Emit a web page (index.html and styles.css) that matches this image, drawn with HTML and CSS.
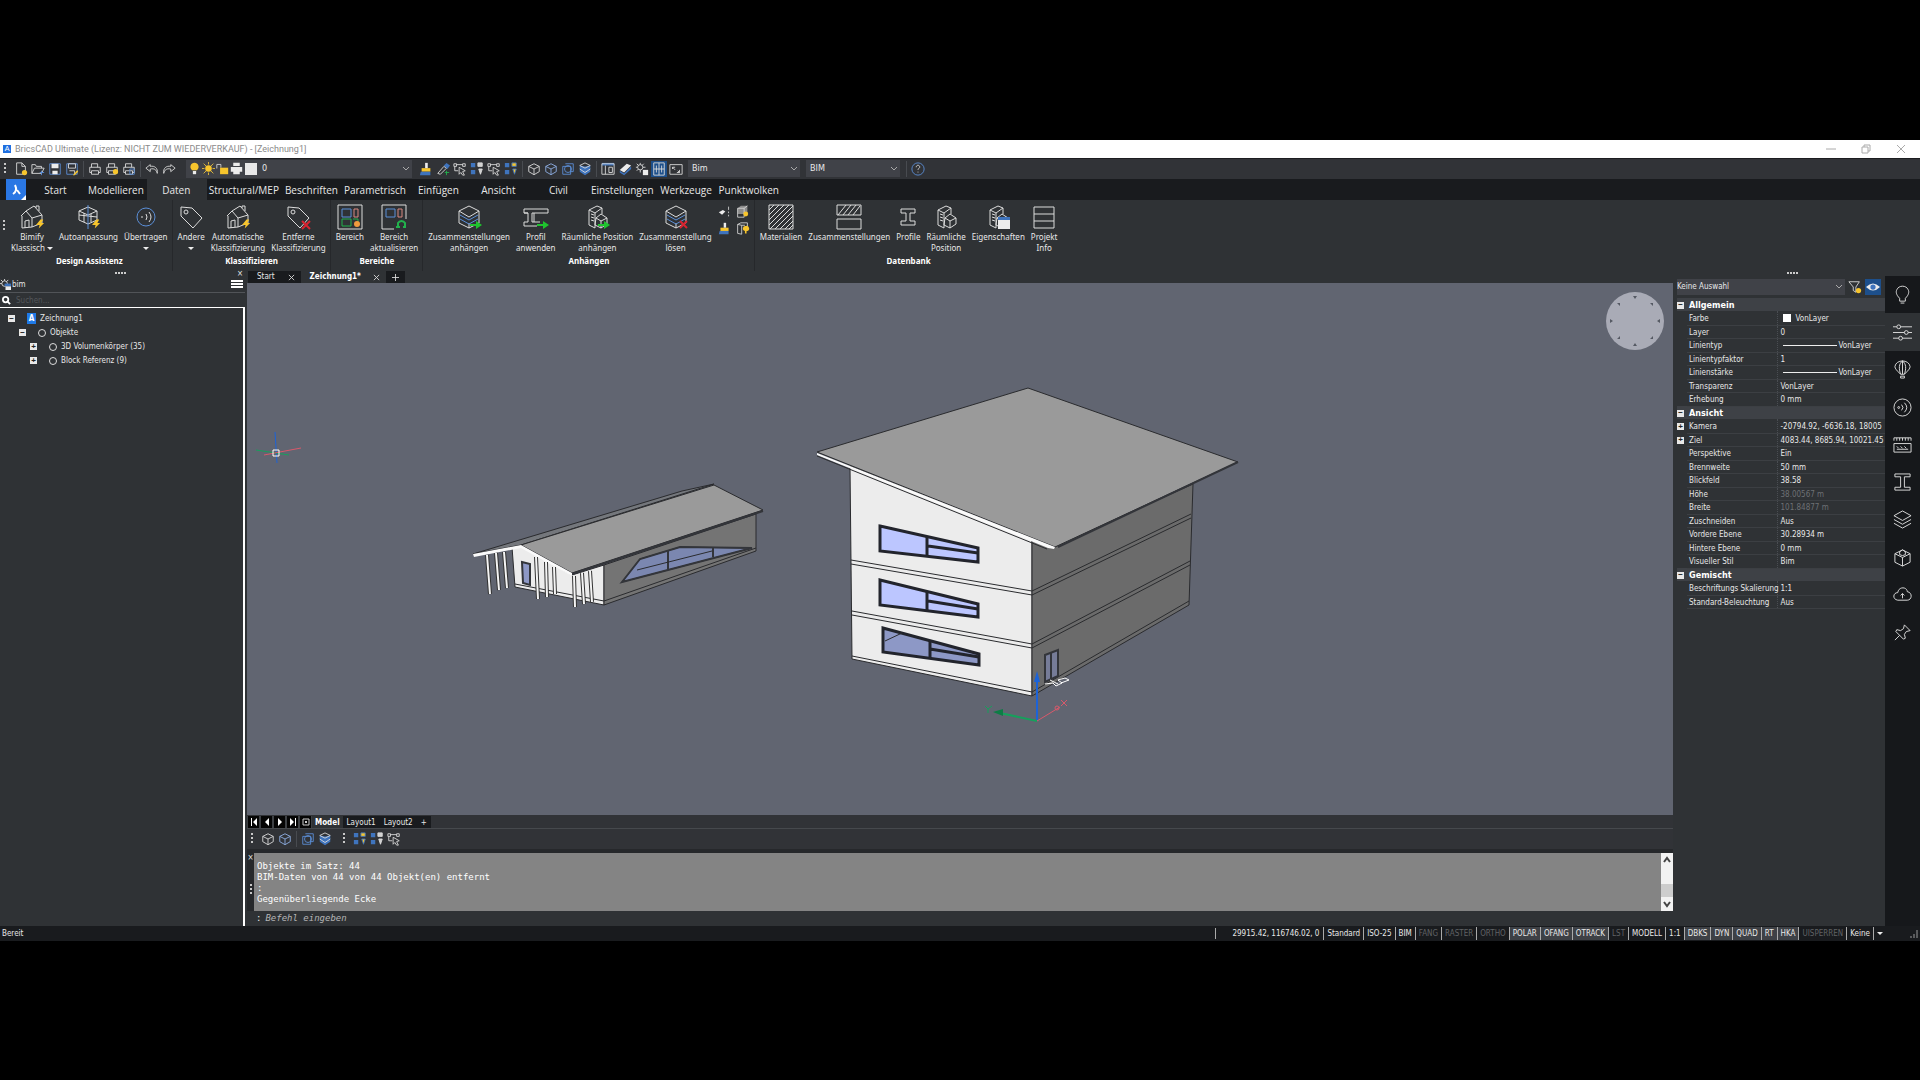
FILE: index.html
```html
<!DOCTYPE html>
<html lang="de">
<head>
	<meta charset="utf-8">
	<title>BricsCAD Ultimate - [Zeichnung1]</title>
	<link rel="stylesheet" href="styles.css">
</head>
<body>
<!-- shared icon parts -->
<svg class="defs" aria-hidden="true">
	<symbol id="cube" viewBox="0 0 16 16"><path d="M8 2l6 3v6l-6 3.500-6-3.500V5zM2 5l6 3 6-3M8 8v6.500"/></symbol>
	<symbol id="printer" viewBox="0 0 16 16"><path d="M4 6V2h7v4M4 12H2V6h12v6h-2M4 10h8v4H4z"/></symbol>
	<symbol id="tag" viewBox="0 0 24 24"><path d="M2 2l11 1 10 10-9 10L2 11z"/><circle cx="7" cy="7" r="2"/></symbol>
	<symbol id="house" viewBox="0 0 24 24"><path d="M1 11L6 6l6 7v9l-10 1v-12M6 6l8-5 8 9v8l-10 4M12 13l10-3M5 23v-7l4-1v7M16 3V1h3v5"/></symbol>
	<symbol id="bolt" viewBox="0 0 10 10"><path d="M5 0L0 6h4L3 10l6-6H6l2-4z"/></symbol>
	<symbol id="layers" viewBox="0 0 24 24"><path d="M12 1l10 5-10 6L2 6zM2 6v12l10 5 10-5V6M12 18v5"/><path class="blue" d="M3 10l9 5 9-5M3 14l9 5 9-5"/></symbol>
	<symbol id="arrow" viewBox="0 0 12 8"><path d="M0 3h6V0l6 4-6 4V5H0z"/></symbol>
	<symbol id="beam" viewBox="0 0 24 24"><path d="M5 4h14v4h-5v8h5v4H5v-4h5V8H5z"/></symbol>
	<symbol id="tower" viewBox="0 0 24 24"><path d="M4 5l8-4 5 2v6M4 5v15l6 3V8zM10 8l7-5M6 9l3 1M6 12l3 1M6 15l3 1M11 13l5-4 6 4v6l-6 4-6-3zM11 13l5 3 6-3M16 16v7"/></symbol>
	<symbol id="cells" viewBox="0 0 16 16"><path class="fb" d="M1 1h5v5H1zM1 9h5v5H1z"/><path d="M9 1h5v4H9z"/><path d="M10 8h4l-2 6z"/></symbol>
	<symbol id="pick" viewBox="0 0 16 16"><path d="M1 2h3v3H1zM11 2h3v3h-3zM4 3h7M2 5v5h4M7 6l7 4-3 1 2 4-2 0-2-3-2 2z"/></symbol>
	<symbol id="brush" viewBox="0 0 16 16"><path class="fy" d="M3 7h10v4H3z"/><path class="fw" d="M7 1h3v6H7z"/><path class="fb" d="M2 11h11v4H1z"/></symbol>
</svg>

<div class="app">
	<header class="title-bar">
		<span class="app-badge">A</span>
		<span class="title">BricsCAD Ultimate (Lizenz: NICHT ZUM WIEDERVERKAUF) - [Zeichnung1]</span>
		<div class="window-buttons">
			<button aria-label="Minimieren"><svg viewBox="0 0 10 10"><path d="M0 5h10"/></svg></button>
			<button aria-label="Verkleinern"><svg viewBox="0 0 10 10"><path d="M1 3h6v6H1zM3 3V1h6v6H7"/></svg></button>
			<button aria-label="Schließen"><svg viewBox="0 0 10 10"><path d="M1 1l8 8M9 1L1 9"/></svg></button>
		</div>
	</header>

	<div class="toolbar">
		<i class="grip"></i>
		<div class="tools">
			<button aria-label="Neu"><svg viewBox="0 0 16 16"><path d="M3 1h6l4 4v9H3zM9 1v4h4"/><circle class="fy" cx="12" cy="12" r="3"/></svg></button>
			<button aria-label="Öffnen"><svg viewBox="0 0 16 16"><path d="M1 13V3h4l1 2h6v2M1 13l3-6h11l-3 6z"/><path class="blue" d="M12 10v5M10 12h5"/></svg></button>
			<button aria-label="Speichern"><svg viewBox="0 0 16 16"><path class="blue" d="M2 2h12v12H2z"/><path class="fw" d="M4 2h8v5H4zM5 10h6v4H5z"/></svg></button>
			<button aria-label="Speichern als"><svg viewBox="0 0 16 16"><path class="blue" d="M2 2h12v12H2z"/><path d="M4 2h8v5H4zM5 10h6v4"/><path class="fy" d="M9 15l5-6 1 2-4 4z"/></svg></button>
		</div>
		<div class="tools">
			<button aria-label="Drucken"><svg><use href="#printer"/></svg></button>
			<button aria-label="Plotten"><svg viewBox="0 0 16 16"><use href="#printer"/><circle class="fy" cx="12" cy="11" r="3"/></svg></button>
			<button aria-label="Vorschau"><svg viewBox="0 0 16 16"><use href="#printer"/><path class="blue" d="M9 8h5v6H9z"/></svg></button>
		</div>
		<div class="tools">
			<button aria-label="Rückgängig"><svg viewBox="0 0 16 16"><path d="M6 3L1 7l5 4V8c5-1 7 1 8 5 1-6-3-9-8-8z"/></svg></button>
			<button aria-label="Wiederholen"><svg viewBox="0 0 16 16"><path d="M10 3l5 4-5 4V8c-5-1-7 1-8 5-1-6 3-9 8-8z"/></svg></button>
		</div>
		<div class="layer-box">
			<svg viewBox="0 0 16 16"><path class="fy" d="M8 1a5 5 0 0 1 3 9H5a5 5 0 0 1 3-9z"/><path class="fw" d="M6 11h4v4H6z"/></svg>
			<svg viewBox="0 0 16 16"><circle class="fy" cx="8" cy="8" r="4"/><path class="yellow" d="M8 0v3M8 13v3M0 8h3M13 8h3M2 2l3 3M11 11l3 3M14 2l-3 3M5 11l-3 3"/></svg>
			<svg viewBox="0 0 16 16"><path d="M1 8V3h5v4"/><path class="fy" d="M5 7h10v8H5z"/></svg>
			<svg viewBox="0 0 16 16"><path class="fw" d="M1 6h14v6H1zM4 1h8v4H4zM4 11h8v4H4z"/></svg>
			<i class="layer-color"></i>
			<select class="combo" aria-label="Layer"><option>0</option></select>
		</div>
		<div class="tools">
			<button aria-label="Eigenschaften übertragen"><svg><use href="#brush"/></svg></button>
			<button aria-label="Pipette"><svg viewBox="0 0 16 16"><path d="M2 13l7-8 3 2-7 7z"/><path class="fb" d="M9 4l3-3 4 3-3 4z"/><path class="green" d="M12 10v5M10 12h5"/></svg></button>
			<button aria-label="Auswahl"><svg><use href="#pick"/></svg></button>
			<button aria-label="Isolieren"><svg class="solid"><use href="#cells"/></svg></button>
			<button aria-label="Ausblenden"><svg><use href="#pick"/></svg></button>
			<button aria-label="Einblenden"><svg class="lit"><use href="#cells"/></svg></button>
		</div>
		<div class="tools">
			<button aria-label="Körper"><svg><use href="#cube"/></svg></button>
			<button aria-label="Kanten"><svg class="bluish"><use href="#cube"/></svg></button>
			<button aria-label="Begrenzung"><svg viewBox="0 0 16 16"><path class="blue" d="M2 5h9v9H2zM5 2h9v9h-3"/><circle class="blue" cx="8" cy="8" r="4"/></svg></button>
			<button aria-label="Flächen"><svg viewBox="0 0 16 16"><path class="fb" d="M8 5l6-1v7l-6 4-6-4V4z"/><path d="M8 1l6 3-6 3-6-3zM2 8l6 4 6-4"/></svg></button>
		</div>
		<div class="tools">
			<button aria-label="Tabelle"><svg viewBox="0 0 16 16"><path class="fb" d="M1 1h14v3H1z"/><path d="M1 2h14v12H1zM5 4v10M9 6h4v6H9z"/></svg></button>
			<button aria-label="Radierer"><svg viewBox="0 0 16 16"><path class="fw" d="M2 9l8-7 5 2-8 8z"/><path class="fb" d="M2 10l5 3 8-8v3l-8 7-5-3z"/></svg></button>
			<button aria-label="Einstellungen"><svg viewBox="0 0 16 16"><circle cx="6" cy="6" r="3"/><path d="M6 1v2M6 9v3M1 6h2M9 6h3M2 2l2 2M10 2L8 4M2 10l2-2"/><path class="fw" d="M9 9h6v6H9z"/></svg></button>
			<button class="pressed" aria-label="Explorer"><svg viewBox="0 0 16 16"><path d="M2 1h12v14H2zM8 1v14M2 8h12M5 4v8M11 4v8"/></svg></button>
			<button aria-label="Vollbild"><svg viewBox="0 0 16 16"><path d="M1 3h14v11H1zM4 8V6h3M9 12h3v-3M4 6l3 3M12 12l-2-2"/></svg></button>
		</div>
		<select class="combo workspace" aria-label="Arbeitsbereich"><option>Bim</option></select>
		<select class="combo profile" aria-label="Profil"><option>BIM</option></select>
		<div class="tools help">
			<button aria-label="Hilfe"><svg viewBox="0 0 16 16"><circle class="blue" cx="8" cy="8" r="7"/><path d="M6 6c0-3 4-3 4 0 0 1-2 1-2 3M8 11v1"/></svg></button>
		</div>
	</div>

	<nav class="ribbon-tabs">
		<button class="logo" aria-label="BricsCAD"><svg viewBox="0 0 20 20"><path d="M9 5c2 4 1 7-2 9M11 10l3 4"/><path class="corner" d="M20 15v5h-5z"/></svg></button>
		<button>Start</button>
		<button>Modellieren</button>
		<button class="active">Daten</button>
		<button>Structural/MEP</button>
		<button>Beschriften</button>
		<button>Parametrisch</button>
		<button>Einfügen</button>
		<button>Ansicht</button>
		<button>Civil</button>
		<button>Einstellungen</button>
		<button>Werkzeuge</button>
		<button>Punktwolken</button>
	</nav>

	<div class="ribbon">
		<i class="grip"></i>
		<section class="group">
			<div class="items">
				<button><svg viewBox="0 0 24 24"><use href="#house"/><use class="fy" href="#bolt" x="16" y="14" width="9" height="10"/></svg>Bimify<br><span>Klassisch <i class="caret"></i></span></button>
				<button><svg viewBox="0 0 24 24"><path d="M3 6l9-4 9 4v9l-9 4-9-4zM3 6l9 4 9-4M3 10l18 2M8 8v9M15 9v8"/><path class="blue" d="M12 0v24"/><use class="fy" href="#bolt" x="16" y="14" width="9" height="10"/></svg>Autoanpassung</button>
				<button><svg viewBox="0 0 24 24"><circle class="blue" cx="12" cy="12" r="9"/><path d="M7 12h2M12 9q2 3 0 6M15 7q4 5 0 10"/></svg>Übertragen<br><i class="caret"></i></button>
			</div>
			<h2>Design Assistenz</h2>
		</section>
		<section class="group">
			<div class="items">
				<button><svg><use href="#tag"/></svg>Andere<br><i class="caret"></i></button>
				<button><svg viewBox="0 0 24 24"><use href="#house"/><use class="fy" href="#bolt" x="16" y="14" width="9" height="10"/></svg>Automatische<br>Klassifizierung</button>
				<button><svg viewBox="0 0 24 24"><use href="#tag"/><path class="red" d="M16 16l8 8M24 16l-8 8"/></svg>Entferne<br>Klassifizierung</button>
			</div>
			<h2>Klassifizieren</h2>
		</section>
		<section class="group areas">
			<div class="items">
				<button><svg viewBox="0 0 24 24"><path d="M0 0h24v24H0z"/><path class="blue" d="M4 4h9v8H4z"/><path class="red thin" d="M16 4h4v8h-4z"/><path class="green thin" d="M4 14h9v7H4zM15 14h5v7"/><circle class="fo" cx="19" cy="19" r="3"/></svg>Bereich</button>
				<button><svg viewBox="0 0 24 24"><path d="M0 0h24v14M0 0v24h12"/><path class="blue" d="M4 4h9v8H4z"/><path class="red thin" d="M16 4h4v8h-4z"/><path class="green bold" d="M16 21v-3a4 4 0 0 1 7 0v3M14 22h4M21 22h3"/></svg>Bereich<br>aktualisieren</button>
			</div>
			<h2>Bereiche</h2>
		</section>
		<section class="group attach">
			<div class="items">
				<button><svg viewBox="0 0 24 24"><use href="#layers"/><use class="fg" href="#arrow" x="13" y="16" width="12" height="8"/></svg>Zusammenstellungen<br>anhängen</button>
				<button><svg viewBox="0 0 24 24"><path d="M0 4h24v4H8v9h8M0 4v4h4v9H0v4h13M0 8h4M10 8v9"/><use class="fg" href="#arrow" x="13" y="16" width="12" height="8"/></svg>Profil<br>anwenden</button>
				<button><svg viewBox="0 0 24 24"><use href="#tower"/><use class="fg" href="#arrow" x="13" y="16" width="12" height="8"/></svg>Räumliche Position<br>anhängen</button>
				<button><svg viewBox="0 0 24 24"><use href="#layers"/><path class="red" d="M16 16l7 7M23 16l-7 7"/></svg>Zusammenstellung<br>lösen</button>
				<div class="mini-tools">
					<button aria-label="Trennen"><svg viewBox="0 0 16 16"><path class="fw" d="M1 9l5-3 3 2-4 4z"/><path d="M13 2v4M13 8v2M13 12v2"/></svg></button>
					<button aria-label="Inhalt"><svg viewBox="0 0 16 16"><path class="fgrey" d="M2 4l4-3h8v10H2z"/><path d="M2 4h8v11H2zM10 4l4-3"/><circle class="fy" cx="12" cy="11" r="3"/></svg></button>
					<button aria-label="Übertragen"><svg><use href="#brush"/></svg></button>
					<button aria-label="Anzeigen"><svg viewBox="0 0 16 16"><path d="M2 3l4-2h8v4M2 3v11l5 1V4zM7 4h4"/><path class="fy" d="M12 5a3 3 0 0 1 2 6h-1v3h-2v-3a3 3 0 0 1 1-6z"/></svg></button>
				</div>
			</div>
			<h2>Anhängen</h2>
		</section>
		<section class="group">
			<div class="items">
				<button><svg viewBox="0 0 24 24"><path d="M0 0h24v24H0zM0 5l5-5M0 10L10 0M0 15L15 0M0 20L20 0M1 24L24 1M6 24L24 6M11 24l13-13M16 24l8-8M20 24l4-4"/></svg>Materialien</button>
				<button><svg viewBox="0 0 24 24"><path d="M0 0h24v10H0zM0 14h24v10H0zM1 10L9 0M6 10l8-10M11 10l8-10M16 10l7-9"/></svg>Zusammenstellungen</button>
				<button><svg><use href="#beam"/></svg>Profile</button>
				<button><svg><use href="#tower"/></svg>Räumliche<br>Position</button>
				<button><svg viewBox="0 0 24 24"><use href="#tower"/><path class="fw" d="M12 12h12v12H12z"/><path class="fb" d="M12 12h12v3H12z"/></svg>Eigenschaften</button>
				<button><svg viewBox="0 0 24 24"><path d="M2 2h20v21H2zM2 9h20M2 16h20"/></svg>Projekt<br>Info</button>
			</div>
			<h2>Datenbank</h2>
		</section>
	</div>

	<main class="workspace-area">
		<aside class="structure">
			<div class="panel-grip"><i></i><button aria-label="Panel schließen">×</button></div>
			<div class="panel-head">
				<svg viewBox="0 0 12 12"><circle cx="5" cy="5" r="3"/><path d="M5 0v2M0 5h2M1 1l2 2M9 1L7 3"/><path class="fb" d="M5 5h7v3H5z"/><path class="fw" d="M6 8h6v4H6z"/></svg>
				<span>bim</span>
				<button aria-label="Menü"><svg viewBox="0 0 12 8"><path d="M0 1h12M0 4h12M0 7h12"/></svg></button>
			</div>
			<label class="search">
				<svg viewBox="0 0 10 10"><circle cx="4" cy="4" r="3"/><path d="M6 6l3 3"/></svg>
				<input type="search" placeholder="Suchen..." aria-label="Suchen">
			</label>
			<ul class="tree">
				<li><button class="fold" aria-label="Zuklappen">−</button><span class="doc">A</span>Zeichnung1
					<ul>
						<li><button class="fold" aria-label="Zuklappen">−</button><span class="ring"></span>Objekte
							<ul>
								<li><button class="fold" aria-label="Aufklappen">+</button><span class="ring"></span>3D Volumenkörper (35)</li>
								<li><button class="fold" aria-label="Aufklappen">+</button><span class="ring"></span>Block Referenz (9)</li>
							</ul>
						</li>
					</ul>
				</li>
			</ul>
		</aside>

		<div class="center">
			<div class="doc-tabs">
				<div class="doc-tab"><button>Start</button><button aria-label="Start schließen"><svg viewBox="0 0 8 8"><path d="M1 1l6 6M7 1L1 7"/></svg></button></div>
				<div class="doc-tab active"><button>Zeichnung1*</button><button aria-label="Zeichnung1 schließen"><svg viewBox="0 0 8 8"><path d="M1 1l6 6M7 1L1 7"/></svg></button></div>
				<button class="add" aria-label="Neue Zeichnung"><svg viewBox="0 0 8 8"><path d="M4 0v8M0 4h8"/></svg></button>
			</div>

			<div class="viewport">
				<svg class="scene" role="img" aria-label="3D Modell">
					<g transform="translate(-247 -283)">
						<!-- low building -->
						<g class="edges">
							<path class="roof-back" d="M473 554L682 491 714 484 521 545z"/>
							<path class="front" d="M512 547L521 546 572 575 604 565V605L515 587z"/>
							<path class="side" d="M604 565L756 514V551L604 605z"/>
							<path class="line" d="M604 601L756 548M515 584L604 601"/>
							<path class="glass-side" d="M622 582L640 559 680 547 752 548z"/>
							<path class="frame" d="M622 582L640 559 680 547 752 548zM668 551V569M713 547V557"/>
							<path class="line" d="M637 570L712 551"/>
							<path class="roof" d="M521 545L714 485 763 510 572 573z"/>
							<path class="frame" d="M572 574L763 511"/>
							<path class="fascia" d="M473 554L521 545 572 573V576L521 548 474 557z"/>
							<path class="glass-dark frame" d="M522 562L530 564V585L523 583z"/>
						</g>
						<path class="post-edge" d="M487 555L490 594M496 553L499 590M504 552L507 588M536 557L538 599M546 562L547 597M554 567L555 594M574 576L575 607M582 573L584 604M590 571L592 602"/>
						<path class="post" d="M487 555L490 594M496 553L499 590M504 552L507 588M536 557L538 599M546 562L547 597M554 567L555 594M574 576L575 607M582 573L584 604M590 571L592 602"/>
						<!-- three storey building -->
						<g class="edges">
							<path class="front" d="M850 466L1032 539V696L852 659z"/>
							<path class="side-dark" d="M1032 539L1055 546 1193 484 1189 605 1032 696z"/>
							<path class="line" d="M851 560L1032 591 1191 514M851 564L1032 595 1191 518M852 611L1032 644 1190 561M852 615L1032 648 1190 565M852 656L1032 692 1189 601"/>
							<path class="roof" d="M817 452L1028 388 1238 462 1055 547z"/>
							<path class="fascia" d="M817 453L1055 547 1054 549 1048 548 817 455z"/>
							<path class="line" d="M817 456L1047 549"/>
							<path class="frame" d="M1058 547L1238 462"/>
							<g class="window">
								<path d="M880 526L978 548V562L880 551z"/>
								<path d="M927 537V556M928 546L978 553"/>
								<path d="M880 580L978 604V617L880 605z"/>
								<path d="M927 592V610M928 601L978 609"/>
								<path class="glass-dark" d="M883 628L979 654V665L883 652z"/>
								<path d="M930 641V658M930 649L979 657"/>
							</g>
							<path class="line" d="M885 641L902 633"/>
							<path class="glass-door frame" d="M1045 655L1058 650V676L1045 682zM1051 653V679"/>
						</g>
						<!-- ucs icon -->
						<path class="note" d="M1045 684l8-1 3 3 6-3-4-3 7-2 4 2-8 3M1050 680l8 4"/>
						<path class="axis-z" d="M1037 721V680"/><path class="cone-z" d="M1037 671l3 11h-6z"/>
						<path class="axis-y" d="M1037 721L1000 713"/><path class="cone-y" d="M993 712l10-3v7z"/><path class="axis-y thin" d="M985 706l3 3 4-3M988 709v4"/>
						<path class="axis-x" d="M1037 721L1060 707"/><circle class="axis-x" cx="1057" cy="708" r="2"/><path class="axis-x thin" d="M1061 700l6 6M1067 700l-6 6"/>
						<!-- crosshair -->
						<path class="axis-z thin" d="M275 432L277 463"/><path class="axis-y thin" d="M256 450L289 455"/><path class="axis-x thin" d="M264 455L301 448"/>
						<path class="cursor" d="M273 450h6v6h-6z"/>
					</g>
				</svg>
				<svg class="look-from" viewBox="0 0 58 58" role="img" aria-label="Blickrichtung">
					<circle cx="29" cy="29" r="29"/>
					<path d="M27 4h4l-2 3zM27 54h4l-2-3zM4 27v4l3-2zM54 27v4l-3-2zM11 11h3v3zM44 11h3v3zM11 47h3v-3zM44 47h3v-3z"/>
				</svg>
			</div>

			<div class="layout-tabs">
				<button class="step" aria-label="Erstes"><svg viewBox="0 0 8 8"><path d="M1 0h1v8H1zM7 0v8L3 4z"/></svg></button>
				<button class="step" aria-label="Zurück"><svg viewBox="0 0 8 8"><path d="M6 0v8L2 4z"/></svg></button>
				<button class="step" aria-label="Weiter"><svg viewBox="0 0 8 8"><path d="M2 0v8l4-4z"/></svg></button>
				<button class="step" aria-label="Letztes"><svg viewBox="0 0 8 8"><path d="M1 0v8l4-4zM6 0h1v8H6z"/></svg></button>
				<button class="step" aria-label="Liste"><svg class="list" viewBox="0 0 8 8"><path d="M1 1h6v6H1zM3 3l2 2M5 3L3 5"/></svg></button>
				<button class="active">Model</button>
				<button>Layout1</button>
				<button>Layout2</button>
				<button>+</button>
			</div>

			<div class="toolbar lower">
				<i class="grip"></i>
				<div class="tools">
					<button aria-label="Körper"><svg><use href="#cube"/></svg></button>
					<button aria-label="Kanten"><svg class="bluish"><use href="#cube"/></svg></button>
				</div>
				<div class="tools">
					<button aria-label="Begrenzung"><svg viewBox="0 0 16 16"><path class="blue" d="M2 5h9v9H2zM5 2h9v9h-3"/><circle class="blue" cx="8" cy="8" r="4"/></svg></button>
					<button aria-label="Flächen"><svg viewBox="0 0 16 16"><path class="fb" d="M8 5l6-1v7l-6 4-6-4V4z"/><path d="M8 1l6 3-6 3-6-3zM2 8l6 4 6-4"/></svg></button>
				</div>
				<i class="grip"></i>
				<div class="tools">
					<button aria-label="Einblenden"><svg class="lit"><use href="#cells"/></svg></button>
					<button aria-label="Isolieren"><svg class="solid"><use href="#cells"/></svg></button>
					<button aria-label="Ausblenden"><svg><use href="#pick"/></svg></button>
				</div>
			</div>

			<div class="command">
				<div class="command-side"><button aria-label="Befehlszeile schließen">×</button><i class="grip"></i></div>
				<pre class="log">Objekte im Satz: 44
BIM-Daten von 44 von 44 Objekt(en) entfernt
:
Gegenüberliegende Ecke</pre>
				<div class="scrollbar">
					<button aria-label="Hoch"><svg viewBox="0 0 8 8"><path d="M1 6l3-4 3 4"/></svg></button>
					<i class="thumb"></i>
					<button aria-label="Runter"><svg viewBox="0 0 8 8"><path d="M1 2l3 4 3-4"/></svg></button>
				</div>
			</div>
			<label class="prompt">: <input type="text" placeholder="Befehl eingeben" aria-label="Befehl"></label>
		</div>

		<aside class="properties">
			<div class="panel-grip"><i></i></div>
			<div class="selection">
				<select class="combo" aria-label="Auswahl"><option>Keine Auswahl</option></select>
				<button aria-label="Filter"><svg viewBox="0 0 16 16"><path d="M1 2h12L9 8v6l-3-2V8z"/><circle class="fy" cx="12" cy="12" r="3"/></svg></button>
				<button class="pressed" aria-label="Vorschau"><svg viewBox="0 0 16 16"><path class="fw" d="M0 8q8-8 16 0-8 8-16 0z"/><circle class="fb" cx="8" cy="8" r="3"/></svg></button>
			</div>
			<table>
				<colgroup><col class="col-fold"><col class="col-name"><col></colgroup>
				<tbody>
					<tr class="head"><td><button class="fold">−</button></td><th colspan="2">Allgemein</th></tr>
					<tr><td></td><th>Farbe</th><td><i class="swatch"></i>VonLayer</td></tr>
					<tr><td></td><th>Layer</th><td>0</td></tr>
					<tr><td></td><th>Linientyp</th><td><i class="stroke"></i>VonLayer</td></tr>
					<tr><td></td><th>Linientypfaktor</th><td>1</td></tr>
					<tr><td></td><th>Linienstärke</th><td><i class="stroke"></i>VonLayer</td></tr>
					<tr><td></td><th>Transparenz</th><td>VonLayer</td></tr>
					<tr><td></td><th>Erhebung</th><td>0 mm</td></tr>
					<tr class="head"><td><button class="fold">−</button></td><th colspan="2">Ansicht</th></tr>
					<tr><td><button class="fold">+</button></td><th>Kamera</th><td>-20794.92, -6636.18, 18005</td></tr>
					<tr><td><button class="fold">+</button></td><th>Ziel</th><td>4083.44, 8685.94, 10021.45</td></tr>
					<tr><td></td><th>Perspektive</th><td>Ein</td></tr>
					<tr><td></td><th>Brennweite</th><td>50 mm</td></tr>
					<tr><td></td><th>Blickfeld</th><td>38.58</td></tr>
					<tr><td></td><th>Höhe</th><td class="locked">38.00567 m</td></tr>
					<tr><td></td><th>Breite</th><td class="locked">101.84877 m</td></tr>
					<tr><td></td><th>Zuschneiden</th><td>Aus</td></tr>
					<tr><td></td><th>Vordere Ebene</th><td>30.28934 m</td></tr>
					<tr><td></td><th>Hintere Ebene</th><td>0 mm</td></tr>
					<tr><td></td><th>Visueller Stil</th><td>Bim</td></tr>
					<tr class="head"><td><button class="fold">−</button></td><th colspan="2">Gemischt</th></tr>
					<tr><td></td><th>Beschriftungs Skalierung</th><td>1:1</td></tr>
					<tr><td></td><th>Standard-Beleuchtung</th><td>Aus</td></tr>
				</tbody>
			</table>
		</aside>

		<nav class="side-tabs">
			<button aria-label="Tipps"><svg viewBox="0 0 20 20"><path d="M7 14C3 10 3 7 4 5c2-5 10-5 12 0 1 2 1 5-3 9v3H7zM8 19h4"/></svg></button>
			<button class="active" aria-label="Eigenschaften"><svg viewBox="0 0 20 20"><path d="M0 4h4M8 4h12M0 10h12M16 10h4M0 16h6M10 16h10"/><circle cx="6" cy="4" r="2"/><circle cx="14" cy="10" r="2"/><circle cx="8" cy="16" r="2"/></svg></button>
			<button aria-label="Ballon"><svg viewBox="0 0 20 20"><path d="M8 15C4 11 2 9 2 7c1-8 15-8 16 0 0 2-2 4-6 8zM8 15C6 9 6 4 10 1c4 3 4 8 2 14M10 1v14M8 17h4v2H8z"/></svg></button>
			<button aria-label="Übertragen"><svg viewBox="0 0 20 20"><circle cx="10" cy="10" r="9"/><circle cx="6" cy="10" r="1"/><path d="M9 7q3 3 0 6M12 5q5 5 0 10"/></svg></button>
			<button aria-label="Bibliothek"><svg viewBox="0 0 20 20"><path d="M1 6V3h18v3M4 3v3M7 3v3M10 3v3M13 3v3M16 3v3M1 9h18v9H1zM4 12l2 2M8 12l2 2M12 12l2 2M4 15h12"/></svg></button>
			<button aria-label="Profile"><svg viewBox="0 0 20 20"><path d="M2 1h16v3h-6v11h6v3H2v-3h6V4H2z"/></svg></button>
			<button aria-label="Layer"><svg viewBox="0 0 20 20"><path d="M10 1l9 5-9 5-9-5zM1 10l9 5 9-5M1 14l9 5 9-5"/></svg></button>
			<button aria-label="Komponenten"><svg viewBox="0 0 20 20"><path d="M10 2l8 4v9l-8 4-8-4V6zM2 6l8 4 8-4M10 10v9M7 4v3l3 1 3-1V4l-3-2z"/></svg></button>
			<button aria-label="Cloud"><svg viewBox="0 0 20 20"><path d="M5 16c-6-1-5-8 0-8 1-7 10-6 10-1 6 1 5 9 0 9zM10 14V9M8 11l2-2 2 2"/></svg></button>
			<button aria-label="Anheften"><svg viewBox="0 0 20 20"><path d="M12 2l6 6-4 1-2 3 1 4-2 1-8-8 1-2 4 1 3-2zM7 13l-5 5"/></svg></button>
		</nav>
	</main>

	<footer class="status-bar">
		<span class="ready">Bereit</span>
		<output class="coords">29915.42, 116746.02, 0</output>
		<button>Standard</button>
		<button>ISO-25</button>
		<button>BIM</button>
		<button class="off">FANG</button>
		<button class="off">RASTER</button>
		<button class="off">ORTHO</button>
		<button class="on">POLAR</button>
		<button class="on">OFANG</button>
		<button class="on">OTRACK</button>
		<button class="off">LST</button>
		<button>MODELL</button>
		<button>1:1</button>
		<button class="on">DBKS</button>
		<button class="on">DYN</button>
		<button class="on">QUAD</button>
		<button class="on">RT</button>
		<button class="on">HKA</button>
		<button class="off">UISPERREN</button>
		<button>Keine</button>
		<button aria-label="Mehr"><i class="caret"></i></button>
		<svg class="signal" viewBox="0 0 8 8"><path d="M1 6v2M4 4v4M7 0v8"/></svg>
	</footer>
</div>
</body>
</html>
```
FILE: styles.css
```css
* { box-sizing: border-box; }
body {
	margin: 0;
	min-height: 100vh;
	display: flex;
	padding: 140px 0 139px;
	background: #000;
	color: #e8e8e8;
	font: 8px/11px "DejaVu Sans Condensed", "DejaVu Sans", sans-serif;
}
button, input, select {
	margin: 0;
	padding: 0;
	border: 0;
	border-radius: 0;
	background: none;
	color: inherit;
	font: inherit;
	white-space: nowrap;
}
svg {
	display: block;
	fill: none;
	stroke: #dcdcdc;
	stroke-width: 1;
	overflow: visible;
}
.defs { position: absolute; width: 0; height: 0; }

/* icon colours */
.blue { stroke: #5b8fd8; fill: none; }
.green { stroke: #22b14c; }
.bold { stroke-width: 2; }
.red { stroke: #d8232f; stroke-width: 2; }
.red.thin { stroke: #d98880; }
.yellow { stroke: #f5c93b; }
.thin { stroke-width: 1; }
.fb { fill: #3f74bd; stroke: none; }
.fw { fill: #ececec; stroke: none; }
.fy { fill: #f7c52d; stroke: none; }
.fo { fill: #f09a3e; stroke: none; }
.fg { fill: #1fc32e; stroke: none; }
.fgrey { fill: #8b8b8b; stroke: none; }
.bluish { stroke: #8fb0e6; }
.solid { fill: #d0d0d0; }
.lit { fill: #f7c52d; stroke: #3f74bd; }

.app {
	flex: 1;
	min-width: 0;
	display: flex;
	flex-direction: column;
	background: #2f3235;
}

.title-bar {
	display: flex;
	align-items: center;
	height: 18px;
	padding-left: 3px;
	background: #fff;
	color: #8a8a8a;
	font: 9px/11px Roboto, sans-serif;
}
.app-badge {
	width: 8px;
	line-height: 8px;
	margin-right: 4px;
	background: #1f6fe0;
	color: #fff;
	font-size: 8px;
	text-align: center;
}
.window-buttons { display: flex; gap: 25px; margin-left: auto; padding-right: 14px; }
.window-buttons svg { width: 10px; height: 10px; stroke: #aaa; }

.toolbar {
	display: flex;
	align-items: center;
	height: 21px;
	padding-bottom: 1px;
	background: #313337;
	border-top: 1px solid #1c1d20;
}
.toolbar .combo { font-size: 9px; }
.grip {
	width: 2px;
	height: 12px;
	margin: 0 4px;
	background: repeating-linear-gradient(#c8c8c8 0 2px, transparent 2px 4px);
}
.tools { display: flex; align-items: center; gap: 1px; padding: 0 3px; }
.tools + .tools { border-left: 1px solid #484b50; }
.tools button { width: 16px; height: 16px; padding: 1px; }
.tools svg { width: 14px; height: 14px; }
.pressed { background: #1d4f8b; }
.layer-box { display: flex; align-items: center; gap: 1px; width: 226px; height: 18px; margin: 0 3px 0 6px; padding-left: 2px; background: #404248; }
.layer-box svg { width: 13px; height: 13px; }
.layer-color { width: 12px; height: 12px; background: #e8e8e8; margin-left: 1px; }
.combo {
	appearance: none;
	height: 17px;
	padding-left: 4px;
	background: #404248 url("data:image/svg+xml,%3Csvg xmlns='http://www.w3.org/2000/svg' viewBox='0 0 8 8'%3E%3Cpath d='M1 2l3 3 3-3' fill='none' stroke='%23aaa'/%3E%3C/svg%3E") no-repeat right 2px center / 8px;
}
.layer-box .combo { flex: 1; }
.workspace { width: 112px; margin: 0 6px 0 1px; }
.profile { width: 94px; margin-right: 6px; }
.help { border-left: 1px solid #484b50; }

.ribbon-tabs {
	display: flex;
	height: 21px;
	padding-left: 6px;
	background: #191b1e;
	font: 10px/20px "Open Sans", sans-serif;
}
.ribbon-tabs button { min-width: 60px; padding: 0 3px 0 2px; }
.ribbon-tabs .logo { min-width: 20px; padding: 0; background: #2a77e4; }
.logo svg { width: 20px; height: 20px; stroke: #fff; stroke-width: 2; }
.logo .corner { fill: #fff; stroke: none; }
.ribbon-tabs .active { background: #2f3235; }

.ribbon {
	display: flex;
	align-items: stretch;
	height: 71px;
	font: 8px/11px "Noto Sans", sans-serif;
}
.ribbon > .grip { margin: 20px 1px 0 3px; }
.group {
	display: flex;
	flex-direction: column;
	padding: 5px 4px 0 5px;
	border-right: 1px solid #26282b;
}
.group:last-child { border: 0; }
.items { display: flex; align-items: flex-start; gap: 6px; height: 50px; }
.items > button { line-height: 11px; text-align: center; }
.items > button svg { width: 24px; height: 24px; margin: 0 auto 2px; }
.group h2 { margin: 0; font: bold 8px/12px "Noto Sans", sans-serif; text-align: center; color: #fff; }
.mini-tools { display: grid; grid-template-columns: 14px 14px; gap: 4px; }
.mini-tools svg { width: 13px; height: 13px; }
.caret {
	display: inline-block;
	border: 3px solid transparent;
	border-top-color: #eee;
	border-bottom: 0;
	vertical-align: middle;
}

.workspace-area { flex: 1; display: flex; min-height: 0; }

.structure {
	display: flex;
	flex-direction: column;
	width: 247px;
	padding-right: 2px;
	flex: none;
}
.panel-grip { position: relative; display: flex; justify-content: center; height: 5px; padding: 1px 3px 0 0; }
.panel-grip i { width: 12px; height: 2px; background: repeating-linear-gradient(90deg, #ccc 0 2px, transparent 2px 3px); }
.panel-grip button { position: absolute; right: 2px; top: 0; line-height: 5px; }
.panel-head { display: flex; align-items: center; height: 17px; padding-right: 1px; border-bottom: 1px solid #515458; }
.panel-head svg { width: 11px; height: 11px; margin-right: 1px; }
.panel-head button { margin-left: auto; }
.panel-head button svg { height: 8px; width: 12px; stroke: #fff; stroke-width: 2; }
.search { display: flex; align-items: center; height: 14px; padding-left: 2px; }
.search svg { width: 9px; height: 9px; stroke: #fff; stroke-width: 2; }
.search input { flex: 1; min-width: 0; padding-left: 5px; outline: 0; }
.search input::placeholder { color: #54575b; }

.tree, .tree ul { margin: 0; padding: 0; list-style: none; line-height: 14px; }
.tree {
	flex: 1;
	padding: 4px 0 0 8px;
	border-top: 1px solid #fff;
	border-right: 2px solid #fff;
}
.tree ul { padding-left: 11px; }
.fold {
	display: inline-block;
	width: 7px;
	height: 7px;
	background: #e8e8e8;
	color: #222;
	font: bold 8px/6px "Liberation Sans", sans-serif;
	text-align: center;
	vertical-align: middle;
}
.tree .fold { margin-right: 12px; }
.doc { display: inline-block; width: 9px; margin-right: 4px; background: #1f7ae8; color: #fff; font-weight: bold; line-height: 11px; text-align: center; }
.ring { display: inline-block; width: 8px; height: 8px; margin-right: 4px; border: 1px solid #ddd; border-radius: 50%; vertical-align: middle; }

.center { flex: 1; min-width: 0; display: flex; flex-direction: column; }
.doc-tabs { display: flex; height: 12px; padding-left: 1px; line-height: 12px; }
.doc-tab { display: flex; align-items: center; gap: 13px; padding: 0 6px 0 9px; background: #191b1e; }
.doc-tab.active { gap: 12px; background: #2f3235; font-weight: bold; color: #fff; }
.doc-tabs svg { width: 7px; height: 7px; }
.add { padding: 0 6px; background: #191b1e; }

.viewport { position: relative; flex: 1; min-height: 0; background: #616571; overflow: hidden; }
.scene { position: absolute; width: 100%; height: 100%; }
.edges path { stroke: #2a2b2e; stroke-width: 1; }
.front { fill: #ececec; }
.side { fill: #747474; }
.side-dark { fill: #6b6b6b; }
.roof { fill: #9a9a9a; }
.roof-back { fill: #74777c; }
.fascia { fill: #fafafa; }
.edges .fascia { stroke-width: 0; }
.edges .frame { stroke-width: 2; stroke: #33353a; }
.glass-side { fill: #7b87b0; }
.glass-door { fill: #767c98; }
.window path { fill: #bcc6ff; }
.edges .window path { stroke: #22242c; stroke-width: 3; }
.edges .glass-dark { fill: #8d98c6; }
.post-edge { stroke: #333; stroke-width: 4; }
.post { stroke: #f4f4f4; stroke-width: 2; }
.note, .cursor { stroke: #fff; }
.axis-z { stroke: #1c63d8; stroke-width: 2; }
.axis-y { stroke: #16a05c; stroke-width: 2; }
.axis-x { stroke: #d8596b; stroke-width: 1; }
.thin.axis-z, .thin.axis-y { stroke-width: 1; }
.cone-z { fill: #1c63d8; stroke: none; }
.cone-y { fill: #0d7d45; stroke: none; }
.look-from { position: absolute; top: 9px; right: 9px; width: 58px; height: 58px; fill: #a9abb6; stroke: none; }
.look-from path { fill: #555963; }

.layout-tabs { display: flex; align-items: center; height: 14px; padding-top: 1px; background: #313337; border-bottom: 1px solid #46494d; }
.layout-tabs button { height: 12px; padding: 0 4px; background: #191b1e; }
.layout-tabs .step { width: 13px; padding: 0 2px; border: 1px solid #3d4044; border-width: 0 1px; background: #050505; }
.layout-tabs svg { width: 8px; height: 8px; fill: #fff; stroke: none; }
.layout-tabs .list { fill: none; stroke: #ccc; }
.layout-tabs .active { padding: 0 3px; background: #2f3235; color: #fff; font-weight: bold; }
.toolbar.lower { height: 20px; border: 0; }
.tools + .grip { margin-left: 7px; }

.command { display: flex; height: 62px; padding-top: 4px; background: #26282b; }
.command-side { display: flex; flex-direction: column; align-items: center; justify-content: space-between; width: 7px; padding-bottom: 15px; }
.command-side button { line-height: 10px; }
.log {
	flex: 1;
	margin: 0;
	padding: 8px 3px 6px;
	background: #848484;
	color: #fff;
	font: 9px/11px "DejaVu Sans Mono", monospace;
}
.scrollbar { display: flex; flex-direction: column; width: 12px; background: #f2f2f2; }
.scrollbar button { padding: 3px 2px; }
.scrollbar svg { width: 8px; height: 8px; stroke: #444; stroke-width: 2; }
.thumb { height: 13px; margin-top: auto; background: #cdcdcd; }
.prompt { display: flex; gap: 4px; height: 15px; padding: 0 0 2px 9px; align-items: center; font: 9px/12px "DejaVu Sans Mono", monospace; }
.prompt input { flex: 1; outline: 0; font-style: italic; }
.prompt input::placeholder { color: #b5b5b5; }

.properties { width: 212px; flex: none; padding-left: 4px; }
.properties .panel-grip { padding: 1px 0 0 24px; }
.selection { display: flex; align-items: center; gap: 2px; height: 17px; margin: 2px 4px 3px 0; }
.selection .combo { flex: 1; height: 16px; padding-left: 0; }
.selection button { width: 16px; height: 16px; padding: 1px; }
.selection svg { width: 14px; height: 14px; }
.properties table { width: 100%; border-collapse: collapse; table-layout: fixed; }
.col-fold { width: 10px; }
.col-name { width: 90px; }
.properties tr { height: 13px; }
.properties tr:nth-child(even) { height: 14px; }
.properties td, .properties th { padding: 1px 0 0; border-bottom: 1px solid #3c3f43; font-weight: normal; line-height: 11px; text-align: left; white-space: nowrap; }
.properties td:first-child { border: 0; }
.properties td:first-child .fold { display: block; }
.properties th { padding-left: 2px; border-right: 1px dotted #4a4d52; }
.properties td:last-child { padding-left: 3px; }
.properties .head { background: #3e4146; }
.properties .head th { padding-top: 0; border: 0; color: #fff; font: bold 9px/12px "DejaVu Sans Condensed", sans-serif; }
.swatch { display: inline-block; width: 8px; height: 8px; margin: 0 5px 0 2px; background: #fff; vertical-align: middle; }
.stroke { display: inline-block; width: 54px; height: 1px; margin: 0 2px; background: #eee; vertical-align: middle; }
.properties .locked { color: #6d7074; }

.side-tabs { display: flex; flex-direction: column; width: 35px; margin-top: 5px; background: #16181b; flex: none; }
.side-tabs button { height: 37px; padding: 9px 8px; }
.side-tabs button:nth-child(even) { height: 38px; }
.side-tabs svg { width: 19px; height: 19px; }
.side-tabs .active { background: #2f3235; }

.status-bar { display: flex; align-items: center; height: 15px; padding-right: 2px; background: #191b1e; }
.ready { margin-right: auto; padding-left: 2px; }
.coords { padding: 0 4px 0 16px; border-left: 1px solid #aaa; }
.status-bar button { height: 13px; padding: 0 3px; border-left: 1px solid #aaa; }
.status-bar .off { color: #606265; }
.status-bar .on { background: #3e4146; }
.signal { width: 8px; height: 8px; margin-left: 24px; stroke: #999; }
```
